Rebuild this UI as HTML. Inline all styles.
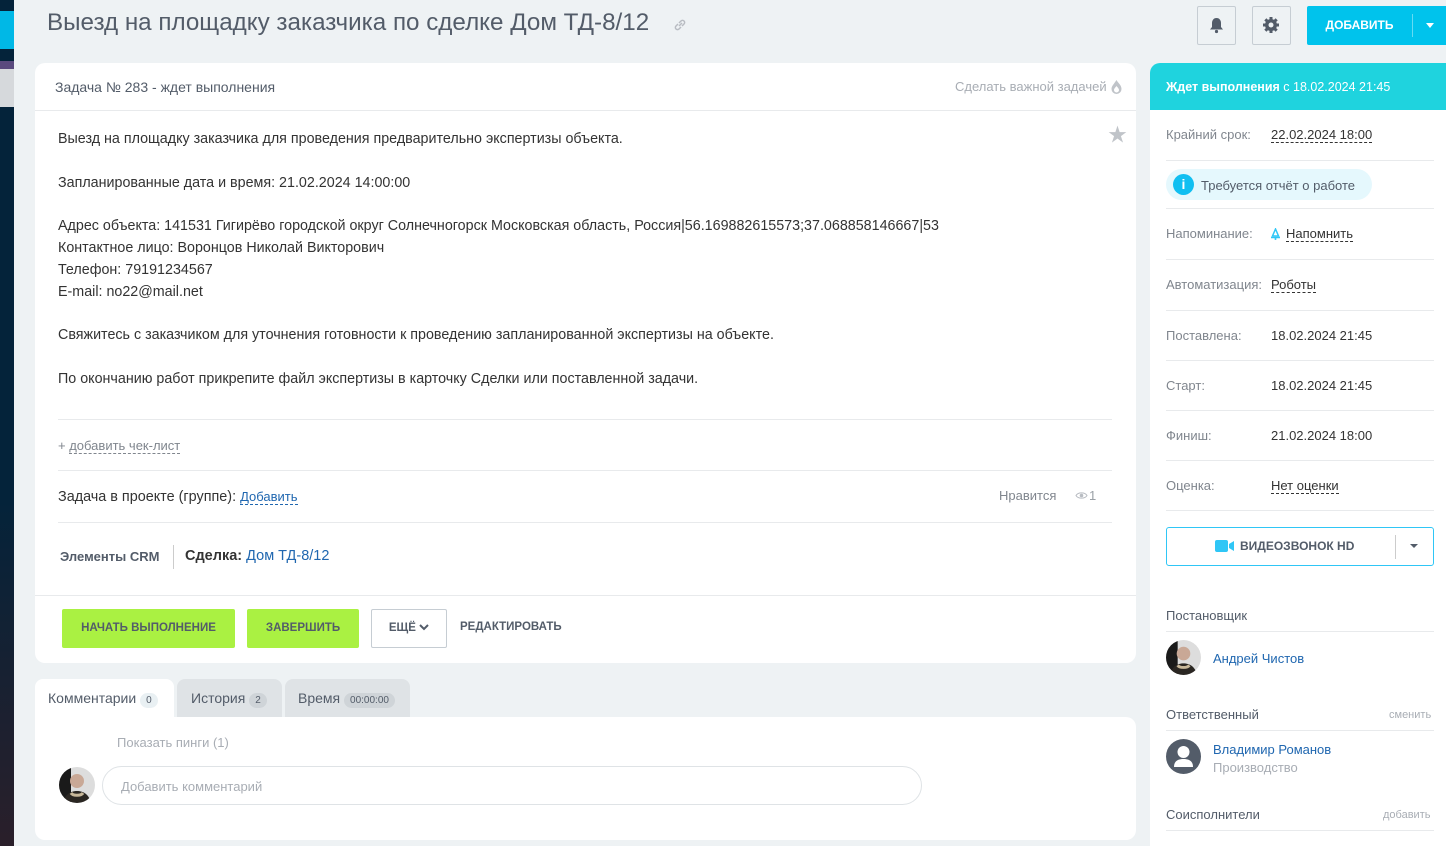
<!DOCTYPE html>
<html><head><meta charset="utf-8"><style>
*{margin:0;padding:0;box-sizing:border-box}
body{width:1446px;height:846px;overflow:hidden;background:#eef2f4;font-family:"Liberation Sans","Noto Sans CJK SC",sans-serif;font-size:14px;color:#333;position:relative}
.a{position:absolute;white-space:nowrap}
.hr{position:absolute;height:1px;background:#e8eaec}
.dash{border-bottom:1px dashed #333}
.lbl{color:#80868e;font-size:13px}
.val{color:#333;font-size:13px}
.btn{position:absolute;font-size:11.5px;font-weight:bold;text-align:center;border-radius:2px}
.av{position:absolute;border-radius:50%;overflow:hidden;background:#ddd}
</style></head><body>
<div class="a" style="left:0;top:0;width:14px;height:846px;background:#04233a"></div>
<div class="a" style="left:0;top:11px;width:14px;height:38px;background:#00b8e6"></div>
<div class="a" style="left:0;top:61px;width:14px;height:8px;background:#5a4a7e"></div>
<div class="a" style="left:0;top:69px;width:14px;height:38px;background:#d6d9dc"></div>
<div class="a" style="left:0;top:500px;width:14px;height:346px;background:linear-gradient(#04233a,#2a1f2a)"></div>

<div class="a" style="left:47px;top:9px;font-size:24.2px;color:#535c69">Выезд на площадку заказчика по сделке Дом ТД-8/12</div>
<svg class="a" style="left:673px;top:18px" width="14" height="14" viewBox="0 0 14 14"><path d="M6 8l3-3M5 6L3 8a2 2 0 003 3l2-2M9 8l2-2a2 2 0 00-3-3L6 5" stroke="#b8bcc2" stroke-width="1.5" fill="none"/></svg>

<div class="a" style="left:1197px;top:6px;width:39px;height:39px;border:1px solid #c6cdd3;border-radius:2px"></div>
<svg class="a" style="left:1208px;top:16px" width="17" height="18" viewBox="0 0 17 18"><path d="M8.5 2c-3 0-4.5 2.5-4.5 5v4l-2 2.5h13L13 11V7c0-2.5-1.5-5-4.5-5z" fill="#535c69"/><circle cx="8.5" cy="15.5" r="1.6" fill="#535c69"/></svg>
<div class="a" style="left:1252px;top:6px;width:39px;height:39px;border:1px solid #c6cdd3;border-radius:2px"></div>
<svg class="a" style="left:1262px;top:16px" width="18" height="18" viewBox="0 0 18 18"><g fill="#535c69"><circle cx="9" cy="9" r="6"/><rect x="7.5" y="1" width="3" height="16"/><rect x="1" y="7.5" width="16" height="3"/><rect x="7.5" y="1" width="3" height="16" transform="rotate(45 9 9)"/><rect x="7.5" y="1" width="3" height="16" transform="rotate(-45 9 9)"/></g><circle cx="9" cy="9" r="2.5" fill="#eef2f4"/></svg>
<div class="a" style="left:1307px;top:6px;width:139px;height:39px;background:#00c3ec;border-radius:2px 0 0 2px"></div>
<div class="a" style="left:1307px;top:18px;width:105px;text-align:center;color:#fff;font-weight:bold;font-size:12px">ДОБАВИТЬ</div>
<div class="a" style="left:1412px;top:14px;width:1px;height:23px;background:rgba(255,255,255,.4)"></div>
<div class="a" style="left:1426px;top:23px;border:4px solid transparent;border-top:5px solid #fff"></div>

<div class="a" style="left:35px;top:63px;width:1101px;height:600px;background:#fff;border-radius:10px"></div>
<div class="a" style="left:55px;top:79px;color:#535c69;font-size:14px">Задача № 283 - ждет выполнения</div>
<div class="a" style="left:955px;top:79px;color:#a8adb4;font-size:13px">Сделать важной задачей</div>
<svg class="a" style="left:1110px;top:79px" width="13" height="15" viewBox="0 0 13 15"><path d="M6.5 1C8 4 11.5 6 11.5 10a5 5 0 01-10 0C1.5 7 4 5 6.5 1z" fill="#c0c4c9"/><path d="M6.5 7c1 1.5 2.5 2.5 2.5 4a2.5 2.5 0 01-5 0c0-1.5 1.5-2.5 2.5-4z" fill="#fff"/></svg>
<div class="hr" style="left:35px;top:110px;width:1101px"></div>
<div class="a" style="left:1108px;top:120px;color:#c0c4c9;font-size:19px">★</div>
<div class="a" style="left:58px;top:129px;line-height:21.8px;font-size:14.3px;color:#333">Выезд на площадку заказчика для проведения предварительно экспертизы объекта.<br><br>Запланированные дата и время: 21.02.2024 14:00:00<br><br>Адрес объекта: 141531 Гигирёво городской округ Солнечногорск Московская область, Россия|56.169882615573;37.068858146667|53<br>Контактное лицо: Воронцов Николай Викторович<br>Телефон: 79191234567<br>E-mail: no22@mail.net<br><br>Свяжитесь с заказчиком для уточнения готовности к проведению запланированной экспертизы на объекте.<br><br>По окончанию работ прикрепите файл экспертизы в карточку Сделки или поставленной задачи.</div>
<div class="hr" style="left:58px;top:419px;width:1054px"></div>
<div class="a" style="left:58px;top:438px;color:#80868e;font-size:13px">+ <span style="border-bottom:1px dashed #80868e">добавить чек-лист</span></div>
<div class="hr" style="left:58px;top:470px;width:1054px"></div>
<div class="a" style="left:58px;top:489px;font-size:14.4px">Задача в проекте (группе): <span style="color:#2067b0;font-size:13px;border-bottom:1px dashed #2067b0">Добавить</span></div>
<div class="a" style="left:999px;top:488px;color:#80868e;font-size:13px">Нравится</div>
<svg class="a" style="left:1075px;top:491px" width="13" height="9" viewBox="0 0 13 9"><path d="M1 4.5C3 1 10 1 12 4.5 10 8 3 8 1 4.5z" fill="none" stroke="#b8bcc2"/><circle cx="6.5" cy="4.5" r="1.8" fill="#b8bcc2"/></svg>
<div class="a" style="left:1089px;top:488px;color:#9aa0a6;font-size:13px">1</div>
<div class="hr" style="left:58px;top:522px;width:1054px"></div>
<div class="a" style="left:60px;top:549px;color:#535c69;font-size:13px;font-weight:bold">Элементы CRM</div>
<div class="a" style="left:173px;top:545px;width:1px;height:24px;background:#ccc"></div>
<div class="a" style="left:185px;top:548px;font-size:14.5px"><b>Сделка:</b> <span style="color:#2067b0">Дом ТД-8/12</span></div>
<div class="hr" style="left:35px;top:595px;width:1101px"></div>
<div class="btn" style="left:62px;top:609px;width:173px;height:39px;background:#aaf142;color:#535c69;line-height:39px">НАЧАТЬ ВЫПОЛНЕНИЕ</div>
<div class="btn" style="left:247px;top:609px;width:112px;height:39px;background:#aaf142;color:#535c69;line-height:39px">ЗАВЕРШИТЬ</div>
<div class="btn" style="left:371px;top:609px;width:76px;height:39px;border:1px solid #c6cdd3;color:#535c69;line-height:37px">ЕЩЁ <svg width="10" height="8" viewBox="0 0 10 8" style="vertical-align:0"><path d="M1 2l4 4 4-4" stroke="#535c69" stroke-width="2" fill="none"/></svg></div>
<div class="btn" style="left:460px;top:621px;color:#535c69">РЕДАКТИРОВАТЬ</div>

<div class="a" style="left:35px;top:679px;width:139px;height:40px;background:#fff;border-radius:8px 8px 0 0"></div>
<div class="a" style="left:48px;top:690px;color:#535c69">Комментарии <span style="display:inline-block;background:#e9f0f3;border-radius:9px;font-size:10px;padding:2px 6px">0</span></div>
<div class="a" style="left:177px;top:679px;width:105px;height:38px;background:#dfe3e6;border-radius:8px 8px 0 0"></div>
<div class="a" style="left:191px;top:690px;color:#535c69">История <span style="display:inline-block;background:#cfd4d8;border-radius:9px;font-size:10px;padding:2px 6px">2</span></div>
<div class="a" style="left:285px;top:679px;width:125px;height:38px;background:#dfe3e6;border-radius:8px 8px 0 0"></div>
<div class="a" style="left:298px;top:690px;color:#535c69">Время <span style="display:inline-block;background:#cfd4d8;border-radius:9px;font-size:10px;padding:2px 6px">00:00:00</span></div>
<div class="a" style="left:35px;top:717px;width:1101px;height:123px;background:#fff;border-radius:0 10px 10px 10px"></div>
<div class="a" style="left:117px;top:735px;color:#a8adb4;font-size:13px">Показать пинги (1)</div>
<div class="av" style="left:59px;top:767px;width:36px;height:36px"><svg width="36" height="36" viewBox="0 0 36 36"><rect width="12" height="36" fill="#1a1a1a"/><circle cx="18" cy="14" r="7" fill="#c9a896"/><path d="M4 36c2-9 8-12 14-12s12 3 14 12z" fill="#2a2622"/><path d="M12 26c2 3 10 3 12 0" stroke="#c8b89a" stroke-width="3" fill="none"/></svg></div>
<div class="a" style="left:102px;top:766px;width:820px;height:39px;border:1px solid #dfe3e6;border-radius:20px;padding:12px 18px;color:#a8adb4;font-size:13px">Добавить комментарий</div>

<div class="a" style="left:1150px;top:63px;width:296px;height:783px;background:#fff;border-radius:10px 0 0 0"></div>
<div class="a" style="left:1150px;top:63px;width:296px;height:47px;background:#1fd3de;border-radius:10px 0 0 0"></div>
<div class="a" style="left:1166px;top:80px;color:#fff;font-size:12.5px"><b>Ждет выполнения</b> с 18.02.2024 21:45</div>
<div class="a lbl" style="left:1166px;top:127px">Крайний срок:</div>
<div class="a val" style="left:1271px;top:127px"><span class="dash">22.02.2024 18:00</span></div>
<div class="hr" style="left:1166px;top:160px;width:268px"></div>
<div class="a" style="left:1166px;top:169px;width:206px;height:31px;background:#e5f8fd;border-radius:16px"></div>
<div class="a" style="left:1173px;top:174px;width:21px;height:21px;border-radius:50%;background:#11bff1;color:#fff;font-weight:bold;font-size:14px;text-align:center;line-height:21px">i</div>
<div class="a" style="left:1201px;top:178px;color:#535c69;font-size:13px">Требуется отчёт о работе</div>
<div class="hr" style="left:1166px;top:208px;width:268px"></div>
<div class="a lbl" style="left:1166px;top:226px">Напоминание:</div>
<svg class="a" style="left:1270px;top:228px" width="11" height="12" viewBox="0 0 11 12"><path d="M5.5 1L2.5 8H8.5z" fill="none" stroke="#2fc6f6" stroke-width="1.5"/><path d="M1 9.5h9" stroke="#2fc6f6" stroke-width="1.5"/><circle cx="5.5" cy="11" r="1" fill="#2fc6f6"/></svg>
<div class="a val" style="left:1286px;top:226px"><span class="dash">Напомнить</span></div>
<div class="hr" style="left:1166px;top:259px;width:268px"></div>
<div class="a lbl" style="left:1166px;top:277px">Автоматизация:</div>
<div class="a val" style="left:1271px;top:277px"><span class="dash">Роботы</span></div>
<div class="hr" style="left:1166px;top:310px;width:268px"></div>
<div class="a lbl" style="left:1166px;top:328px">Поставлена:</div>
<div class="a val" style="left:1271px;top:328px">18.02.2024 21:45</div>
<div class="hr" style="left:1166px;top:360px;width:268px"></div>
<div class="a lbl" style="left:1166px;top:378px">Старт:</div>
<div class="a val" style="left:1271px;top:378px">18.02.2024 21:45</div>
<div class="hr" style="left:1166px;top:410px;width:268px"></div>
<div class="a lbl" style="left:1166px;top:428px">Финиш:</div>
<div class="a val" style="left:1271px;top:428px">21.02.2024 18:00</div>
<div class="hr" style="left:1166px;top:460px;width:268px"></div>
<div class="a lbl" style="left:1166px;top:478px">Оценка:</div>
<div class="a val" style="left:1271px;top:478px"><span class="dash">Нет оценки</span></div>
<div class="hr" style="left:1166px;top:510px;width:268px"></div>
<div class="a" style="left:1166px;top:527px;width:268px;height:39px;border:1px solid #2fc6f6;border-radius:3px"></div>
<svg class="a" style="left:1215px;top:540px" width="19" height="12" viewBox="0 0 19 12"><rect x="0" y="0" width="13" height="12" rx="2" fill="#2fc6f6"/><path d="M14 4l5-3v10l-5-3z" fill="#2fc6f6"/></svg>
<div class="a" style="left:1240px;top:539px;color:#535c69;font-size:12px;font-weight:bold">ВИДЕОЗВОНОК HD</div>
<div class="a" style="left:1395px;top:535px;width:1px;height:24px;background:#ccc"></div>
<div class="a" style="left:1410px;top:544px;border:4px solid transparent;border-top:4px solid #535c69"></div>
<div class="a" style="left:1166px;top:608px;color:#535c69;font-size:13px">Постановщик</div>
<div class="hr" style="left:1166px;top:631px;width:268px"></div>
<div class="av" style="left:1166px;top:640px;width:35px;height:35px"><svg width="35" height="35" viewBox="0 0 36 36"><rect width="12" height="36" fill="#1a1a1a"/><circle cx="18" cy="14" r="7" fill="#c9a896"/><path d="M4 36c2-9 8-12 14-12s12 3 14 12z" fill="#2a2622"/><path d="M12 26c2 3 10 3 12 0" stroke="#c8b89a" stroke-width="3" fill="none"/></svg></div>
<div class="a" style="left:1213px;top:651px;color:#2067b0;font-size:13px">Андрей Чистов</div>
<div class="a" style="left:1166px;top:707px;color:#535c69;font-size:13px">Ответственный</div>
<div class="a" style="left:1389px;top:709px;color:#a8adb4;font-size:11px">сменить</div>
<div class="hr" style="left:1166px;top:730px;width:268px"></div>
<div class="a" style="left:1166px;top:739px;width:35px;height:35px;border-radius:50%;background:#535c69;overflow:hidden"><svg width="35" height="35" viewBox="0 0 35 35"><circle cx="17.5" cy="13" r="6" fill="#fff"/><path d="M8 28c0-6 4-8 9.5-8s9.5 2 9.5 8z" fill="#fff"/></svg></div>
<div class="a" style="left:1213px;top:742px;color:#2067b0;font-size:13px">Владимир Романов</div>
<div class="a" style="left:1213px;top:760px;color:#a8adb4;font-size:13px">Производство</div>
<div class="a" style="left:1166px;top:807px;color:#535c69;font-size:13px">Соисполнители</div>
<div class="a" style="left:1383px;top:809px;color:#a8adb4;font-size:11px">добавить</div>
<div class="hr" style="left:1166px;top:830px;width:268px"></div>
</body></html>
